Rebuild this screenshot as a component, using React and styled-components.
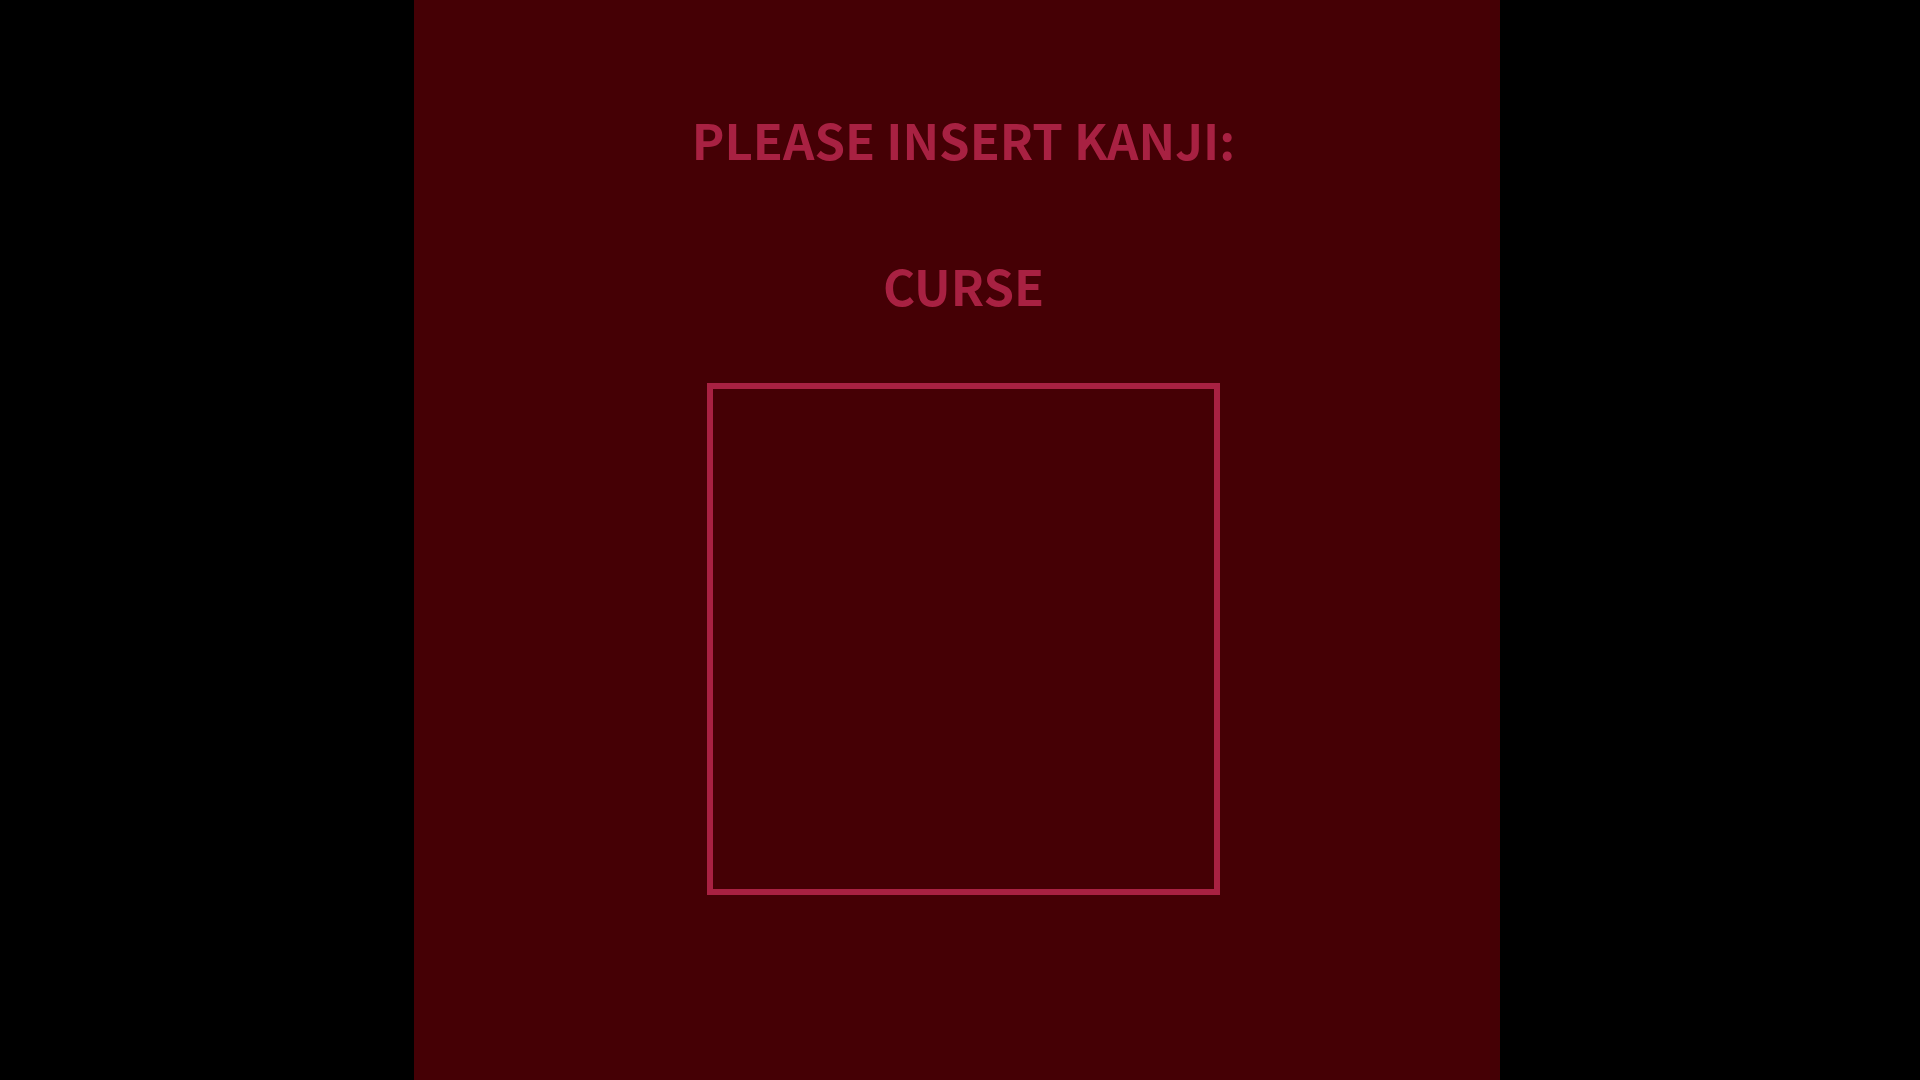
import React from "react";
import styled, { createGlobalStyle } from "styled-components";

const Global = createGlobalStyle`
  html, body { margin: 0; padding: 0; background: #000; }
  body { width: 1920px; height: 1080px; overflow: hidden; }
  #root { height: 100%; }
`;

const Stage = styled.div`
  display: flex;
  width: 1920px;
  height: 1080px;
  background: #000;
  padding-left: 414px;
  box-sizing: border-box;
`;

const Panel = styled.main`
  width: 1086px;
  height: 1080px;
  background: #450005;
  display: flex;
  flex-direction: column;
  align-items: center;
  padding-left: 13px;
  box-sizing: border-box;
  font-family: "Noto Sans CJK JP", "Noto Sans", sans-serif;
  color: #a82142;
`;

const Heading = styled.h1`
  margin: 114px 0 0;
  font-size: 49px;
  font-weight: 700;
  line-height: 1;
  letter-spacing: 0;
`;

const Word = styled.h2`
  margin: 97px 0 0;
  font-size: 49px;
  font-weight: 700;
  line-height: 1;
`;

const DrawBox = styled.div`
  margin-top: 74px;
  width: 513px;
  height: 512px;
  box-sizing: border-box;
  border: 6px solid #a82142;
`;

export default function App() {
  return (
    <>
      <Global />
      <Stage>
        <Panel>
          <Heading>PLEASE INSERT KANJI:</Heading>
          <Word>CURSE</Word>
          <DrawBox />
        </Panel>
      </Stage>
    </>
  );
}
